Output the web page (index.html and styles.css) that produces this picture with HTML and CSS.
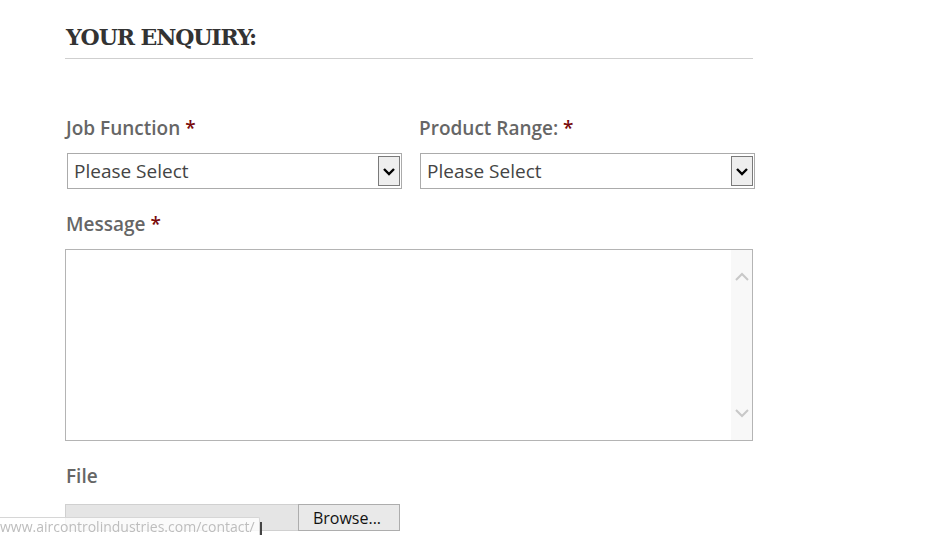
FILE: index.html
```html
<!DOCTYPE html>
<html>
<head>
<meta charset="utf-8">
<link rel="stylesheet" href="styles.css">
</head>
<body>
<div class="form">
  <h2 class="title">YOUR ENQUIRY:</h2>
  <div class="row">
    <div class="field">
      <div class="label">Job Function <span class="req">*</span></div>
      <div class="select">
        <span class="value">Please Select</span>
        <span class="arrow"><svg width="14" height="9" viewBox="0 0 14 9"><path d="M2 2 L7 7 L12 2" fill="none" stroke="#000" stroke-width="2.4"/></svg></span>
      </div>
    </div>
    <div class="field">
      <div class="label">Product Range: <span class="req">*</span></div>
      <div class="select">
        <span class="value">Please Select</span>
        <span class="arrow"><svg width="14" height="9" viewBox="0 0 14 9"><path d="M2 2 L7 7 L12 2" fill="none" stroke="#000" stroke-width="2.4"/></svg></span>
      </div>
    </div>
  </div>
  <div class="label msg-label">Message <span class="req">*</span></div>
  <div class="textarea">
    <div class="text-area-body"></div>
    <div class="scrollbar">
      <svg width="14" height="9" viewBox="0 0 14 9"><path d="M1 8 L7 2 L13 8" fill="none" stroke="#c8c8c8" stroke-width="2"/></svg>
      <svg width="14" height="9" viewBox="0 0 14 9"><path d="M1 1 L7 7 L13 1" fill="none" stroke="#c8c8c8" stroke-width="2"/></svg>
    </div>
  </div>
  <div class="label file-label">File</div>
  <div class="file">
    <div class="file-path"></div>
    <div class="browse">Browse...</div>
  </div>
</div>
<div class="status">www.aircontrolindustries.com/contact/</div>
<div class="cursor"></div>
</body>
</html>
```
FILE: styles.css
```css
html, body {
  margin: 0;
  padding: 0;
  background: #fff;
  overflow: hidden;
}
body {
  font-family: "Open Sans", "Liberation Sans", sans-serif;
  width: 937px;
  height: 535px;
}
.form {
  margin-left: 65px;
  width: 688px;
  padding-top: 23px;
}
.title {
  margin: 0;
  font-family: "DejaVu Serif", "Liberation Serif", serif;
  font-weight: bold;
  font-size: 22px;
  line-height: 28px;
  color: #333;
  padding-left: 1px;
  padding-bottom: 7px;
  border-bottom: 1px solid #cfcfcf;
  letter-spacing: -1.1px;
}
.row {
  display: flex;
  gap: 16px;
  margin-top: 57px;
}
.field {
  width: 337px;
}
.label {
  font-size: 19px;
  font-weight: 600;
  line-height: 24px;
  color: #666;
  padding-left: 1px;
}
.req {
  color: #7a0b0b;
}
.select {
  margin-top: 13px;
  margin-left: 2px;
  height: 34px;
  border: 1px solid #ababab;
  display: flex;
  align-items: center;
  justify-content: space-between;
  padding: 0 1px 0 6px;
  width: 326px;
}
.value {
  font-size: 19px;
  color: #444;
}
.arrow {
  width: 20px;
  height: 28px;
  border: 1px solid #7a7a7a;
  background: #eeeeee;
  display: flex;
  align-items: center;
  justify-content: center;
}
.msg-label {
  margin-top: 23px;
}
.textarea {
  margin-top: 13px;
  height: 190px;
  border: 1px solid #b4b4b4;
  display: flex;
}
.text-area-body {
  flex: 1;
}
.scrollbar {
  width: 21px;
  background: #f8f8f8;
  display: flex;
  flex-direction: column;
  justify-content: space-between;
  align-items: center;
  padding: 22px 0 22px;
}
.file-label {
  margin-top: 23px;
}
.file {
  margin-top: 16px;
  display: flex;
  height: 27px;
  width: 335px;
}
.file-path {
  width: 232px;
  background: #e5e5e5;
  border: 1px solid #d0d0d0;
  border-right: none;
}
.browse {
  flex: 1;
  border: 1px solid #adadad;
  background: #e9e9e9;
  font-size: 16px;
  color: #111;
  display: flex;
  align-items: center;
  justify-content: center;
  padding-right: 4px;
}
.status {
  position: fixed;
  left: 0;
  bottom: 0;
  width: 259px;
  height: 17px;
  border: 1px solid #d6d6d6;
  border-left: none;
  border-bottom: none;
  border-top-right-radius: 2px;
  background: rgba(255, 255, 255, 0.8);
  color: #bdbdbd;
  font-size: 14px;
  line-height: 18px;
  white-space: nowrap;
  overflow: hidden;
}
.cursor {
  position: fixed;
  left: 260px;
  bottom: 0;
  width: 2px;
  height: 13px;
  background: #444;
}
```
